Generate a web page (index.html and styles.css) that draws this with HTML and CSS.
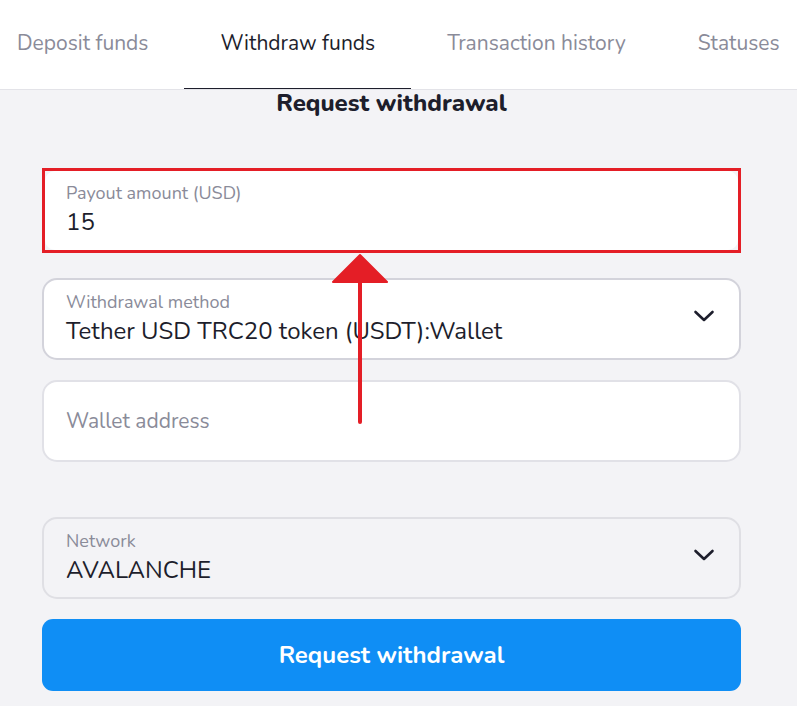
FILE: index.html
```html
<!DOCTYPE html>
<html lang="en">
<head>
<meta charset="utf-8">
<title>Request withdrawal</title>
<link rel="stylesheet" href="styles.css">
</head>
<body>
<header class="tabs-bar">
  <nav class="tabs">
    <a class="tab">Deposit funds</a>
    <a class="tab tab-active">Withdraw funds</a>
    <a class="tab">Transaction history</a>
    <a class="tab">Statuses</a>
  </nav>
</header>
<main class="content">
  <h1 class="title">Request withdrawal</h1>
  <form class="form">
    <div class="highlight">
      <div class="field field-white">
        <span class="label">Payout amount (USD)</span>
        <span class="value">15</span>
      </div>
    </div>
    <div class="field field-white field-select field-method">
      <div class="field-text">
        <span class="label">Withdrawal method</span>
        <span class="value">Tether USD TRC20 token (USDT):Wallet</span>
      </div>
      <svg class="chevron" width="22" height="14" viewBox="0 0 22 14"><path d="M2.5 3 L11 11 L19.5 3" fill="none" stroke="#1d1e2c" stroke-width="2.6" stroke-linecap="round" stroke-linejoin="round"/></svg>
    </div>
    <div class="field field-white field-wallet">
      <span class="placeholder">Wallet address</span>
    </div>
    <div class="field field-gray field-select field-network">
      <div class="field-text">
        <span class="label">Network</span>
        <span class="value">AVALANCHE</span>
      </div>
      <svg class="chevron" width="22" height="14" viewBox="0 0 22 14"><path d="M2.5 3 L11 11 L19.5 3" fill="none" stroke="#1d1e2c" stroke-width="2.6" stroke-linecap="round" stroke-linejoin="round"/></svg>
    </div>
    <button type="button" class="submit">Request withdrawal</button>
  </form>
  <svg class="arrow" width="60" height="175" viewBox="0 0 60 175">
    <line x1="30" y1="25" x2="30" y2="169" stroke="#e41e26" stroke-width="4" stroke-linecap="round"/>
    <path d="M30 2 L57 29 L3 29 Z" fill="#e41e26" stroke="#e41e26" stroke-width="2" stroke-linejoin="round"/>
  </svg>
</main>
</body>
</html>
```

FILE: styles.css
```css
* { box-sizing: border-box; }

body {
  margin: 0;
  background: #f3f3f6;
  font-family: "Nunito", "Open Sans", "Noto Sans", sans-serif;
  color: #1d1e2c;
  overflow: hidden;
}

.tabs-bar {
  background: #ffffff;
  height: 90px;
  border-bottom: 1px solid #e3e3e8;
  overflow: hidden;
}

.tabs {
  display: flex;
  margin-left: -19px;
  height: 89px;
  white-space: nowrap;
}

.tab {
  display: flex;
  align-items: center;
  padding: 0 36px 2px;
  font-size: 21px;
  color: #8a8b99;
  border-bottom: 2px solid transparent;
  height: 90px;
}

.tab-active {
  color: #1d1e2c;
  border-bottom-color: #1d1e2c;
}

.content {
  position: relative;
  padding: 0 56px 0 42px;
}

.title {
  margin: 0;
  text-align: center;
  font-size: 24px;
  font-weight: 800;
  line-height: 26px;
  color: #1d1e2c;
}

.form {
  display: flex;
  flex-direction: column;
  margin-top: 52px;
}

.highlight {
  border: 3px solid #e41e26;
  background: #f3f3f6;
}

.field {
  border-radius: 15px;
  height: 82px;
  padding: 0 22px;
  display: flex;
  flex-direction: column;
  justify-content: center;
}

.field-white {
  background: #ffffff;
  border: 2px solid #e1e1e7;
}

.highlight .field {
  border: none;
  height: 79px;
  border-radius: 10px;
  padding: 0 21px;
}

.field-gray {
  background: #f3f3f6;
  border: 2px solid #dfdfe4;
}

.field-method {
  margin-top: 25px;
  border-color: #d3d3db;
}

.field-wallet {
  margin-top: 20px;
}

.field-network {
  margin-top: 55px;
}

.field-select {
  flex-direction: row;
  align-items: center;
  justify-content: space-between;
  padding-right: 24px;
}

.field-text {
  display: flex;
  flex-direction: column;
}

.label {
  font-size: 18px;
  line-height: 20px;
  color: #8a8b99;
}

.value {
  font-size: 24px;
  line-height: 32px;
  color: #1d1e2c;
  margin-top: 3px;
}

.placeholder {
  font-size: 21px;
  color: #8a8b99;
}

.chevron {
  margin-top: -6px;
}

.submit {
  margin-top: 20px;
  height: 72px;
  border: none;
  border-radius: 11px;
  background: #0f8ef5;
  color: #ffffff;
  font-family: "Nunito", "Open Sans", "Noto Sans", sans-serif;
  font-size: 24px;
  font-weight: 700;
}

.arrow {
  position: absolute;
  left: 330px;
  top: 163px;
}
```
